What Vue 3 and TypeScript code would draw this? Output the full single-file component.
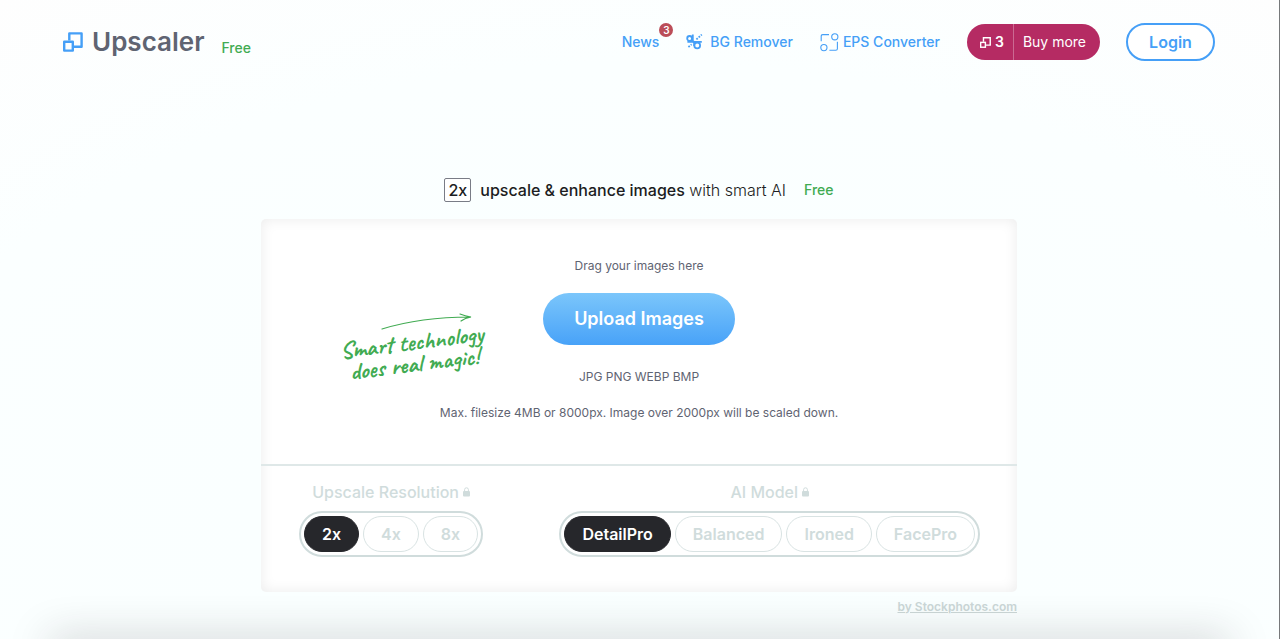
<script setup lang="ts">
import { ref } from 'vue'

const resolutions: string[] = ['2x', '4x', '8x']
const models: string[] = ['DetailPro', 'Balanced', 'Ironed', 'FacePro']
const resolution = ref('2x')
const model = ref('DetailPro')
</script>

<template>
  <div class="page">
    <header class="header">
      <a class="brand" href="#">
        <svg class="brand-icon" viewBox="0 0 20 20" aria-hidden="true">
          <path d="M6.3 8.6V1.4H18.6V14.8H11" />
          <rect x="1.2" y="9.8" width="8.6" height="8.8" />
        </svg>
        <span class="brand-name">Upscaler</span>
        <span class="free">Free</span>
      </a>
      <nav class="nav">
        <a class="nav-link news" href="#">News<span class="badge">3</span></a>
        <a class="nav-link remover" href="#">
          <svg class="remover-icon" viewBox="0 0 17 17" aria-hidden="true">
            <circle cx="3.6" cy="4.4" r="2.4" />
            <path d="M6.8 .4V6.2Q6.8 7.8 8.6 7.8H15.8M1.4 7.8H6.4Q8.2 7.8 8.2 9.6V12" />
            <circle cx="11.2" cy="11.4" r="2.9" />
            <path class="dots" d="M10.4 5.4L15.8 .6M2.4 13L5.6 10.4" />
          </svg>
          BG Remover
        </a>
        <a class="nav-link eps" href="#">
          <svg class="eps-icon" viewBox="0 0 19 19" aria-hidden="true">
            <path d="M1.2 8.2V3.2Q1.2 1.6 2.8 1.6H9M17.4 8.8V15.8Q17.4 17.3 15.8 17.3H9.4" />
            <circle cx="14.8" cy="3.8" r="3.1" />
            <circle cx="3.9" cy="14.6" r="3.1" />
          </svg>
          EPS Converter
        </a>
        <div class="credits">
          <span class="count">
            <svg class="count-icon" viewBox="0 0 20 20" aria-hidden="true">
              <path d="M6.3 8.6V1.4H18.6V14.8H11" />
              <rect x="1.2" y="9.8" width="8.6" height="8.8" />
            </svg>
            3
          </span>
          <a class="buy" href="#">Buy more</a>
        </div>
        <button class="login" type="button">Login</button>
      </nav>
    </header>

    <main class="main">
      <h1 class="title">
        <span class="factor">2x</span>
        <span><strong>upscale &amp; enhance images</strong> with smart AI</span>
        <span class="free">Free</span>
      </h1>

      <section class="card">
        <div class="drop">
          <p class="hint">Drag your images here</p>
          <div class="upload-row">
            <button class="upload" type="button">Upload Images</button>
            <div class="note">
              <svg class="arrow" viewBox="0 0 92 18" aria-hidden="true">
                <path d="M1 16Q40 4 89 4M79 1Q84 3 90 4Q84 5 80 8" />
              </svg>
              <p class="script">Smart technology<br />does real magic!</p>
            </div>
          </div>
          <p class="formats">JPG PNG WEBP BMP</p>
          <p class="limits">Max. filesize 4MB or 8000px. Image over 2000px will be scaled down.</p>
        </div>

        <div class="options">
          <fieldset class="group">
            <legend class="legend">
              Upscale Resolution
              <svg class="lock" viewBox="0 0 7 10" aria-hidden="true">
                <rect x="0" y="4" width="7" height="5.5" rx="1" />
                <path d="M1.6 4.4V2.6Q1.6 .8 3.5 .8T5.4 2.6V4.4" />
              </svg>
            </legend>
            <div class="pills">
              <label v-for="item in resolutions" :key="item" class="pill" :class="{ active: item === resolution }">
                <input v-model="resolution" class="radio" type="radio" name="resolution" :value="item" />{{ item }}
              </label>
            </div>
          </fieldset>
          <fieldset class="group">
            <legend class="legend">
              AI Model
              <svg class="lock" viewBox="0 0 7 10" aria-hidden="true">
                <rect x="0" y="4" width="7" height="5.5" rx="1" />
                <path d="M1.6 4.4V2.6Q1.6 .8 3.5 .8T5.4 2.6V4.4" />
              </svg>
            </legend>
            <div class="pills">
              <label v-for="item in models" :key="item" class="pill" :class="{ active: item === model }">
                <input v-model="model" class="radio" type="radio" name="model" :value="item" />{{ item }}
              </label>
            </div>
          </fieldset>
        </div>
      </section>
      <a class="credit" href="#">by Stockphotos.com</a>
    </main>
  </div>
</template>

<style>
body {
  margin: 0;
}
</style>

<style scoped>
.page {
  position: relative;
  box-sizing: border-box;
  min-height: 100vh;
  padding-right: 1px;
  overflow: hidden;
  border-right: 1px solid #77797b;
  font-family: Inter, "Liberation Sans", sans-serif;
  color: #5f6472;
  background: radial-gradient(ellipse 85% 100% at 50% 80%, #f9ffff 0%, #fbffff 70%, #fefefe 100%);
}

.page::after {
  content: "";
  position: absolute;
  right: 50px;
  bottom: -20px;
  left: 50px;
  height: 20px;
  box-shadow: 0 0 42px rgba(40, 30, 40, 0.26);
}

a {
  color: inherit;
  text-decoration: none;
}

.header {
  display: flex;
  align-items: center;
  justify-content: space-between;
  height: 84px;
  padding: 0 63px;
}

.brand {
  display: flex;
  align-items: center;
}

.brand-icon,
.count-icon,
.remover-icon,
.eps-icon {
  fill: none;
  stroke: currentColor;
}

.brand-icon {
  width: 20px;
  height: 20px;
  margin-right: 9px;
  color: #459ff7;
  stroke-width: 2.4;
  stroke-linejoin: round;
}

.brand-name {
  margin-right: 17px;
  font-size: 26px;
  font-weight: 600;
  line-height: 36px;
}

.free {
  color: #41ab52;
  font-size: 14px;
  font-weight: 500;
}

.brand .free {
  padding-top: 10px;
}

.nav {
  display: flex;
  align-items: center;
}

.nav-link {
  display: flex;
  align-items: center;
  color: #459ff7;
  font-size: 14px;
  font-weight: 500;
  line-height: 20px;
}

.news {
  position: relative;
  margin-right: 27px;
}

.badge {
  position: absolute;
  top: -9px;
  left: 100%;
  width: 14px;
  height: 14px;
  border-radius: 50%;
  background: #bb4d58;
  color: #fff;
  font-size: 10px;
  font-weight: 600;
  line-height: 14px;
  text-align: center;
}

.remover {
  gap: 7px;
  margin-right: 27px;
}

.remover-icon {
  width: 17px;
  height: 17px;
  stroke-width: 1.8;
}

.dots {
  stroke-dasharray: 1.8 1.2;
}

.eps {
  gap: 4px;
  margin-right: 27px;
}

.eps-icon {
  width: 19px;
  height: 19px;
  stroke-width: 1.1;
}

.credits {
  display: flex;
  height: 36px;
  margin-right: 26px;
  overflow: hidden;
  border-radius: 18px;
  background: #b52b63;
  color: #fff;
  font-size: 14px;
  line-height: 36px;
}

.count {
  display: flex;
  align-items: center;
  gap: 4px;
  padding: 0 9px 0 13px;
  border-right: 1px solid #cb6a92;
  font-weight: 600;
}

.count-icon {
  width: 11px;
  height: 11px;
  stroke-width: 2.6;
}

.buy {
  padding: 0 14px 0 9px;
}

.login {
  box-sizing: border-box;
  width: 89px;
  height: 38px;
  padding: 0;
  border: 2px solid #459ff7;
  border-radius: 19px;
  background: #fff;
  color: #459ff7;
  font: 600 16px/34px Inter, "Liberation Sans", sans-serif;
}

.main {
  display: flex;
  flex-direction: column;
  width: 756px;
  max-width: 100%;
  margin: 93px auto 0;
}

.title {
  display: flex;
  align-items: center;
  justify-content: center;
  height: 25px;
  margin: 0 0 17px;
  color: #1c1d22;
  font-size: 16px;
  font-weight: 300;
}

.title strong {
  font-weight: 500;
}

.factor {
  margin-right: 9px;
  padding: 0 3px;
  border: 1px solid #797c86;
  border-radius: 2px;
  background: #fff;
  font-weight: 500;
  line-height: 22px;
}

.title .free {
  margin-left: 18px;
}

.card {
  border-radius: 5px;
  background: #fff;
  box-shadow: inset 0 0 14px rgba(0, 0, 0, 0.08);
}

.drop {
  display: flex;
  flex-direction: column;
  align-items: center;
  height: 247px;
  box-sizing: border-box;
  padding-top: 38px;
  border-bottom: 2px solid #dfe8e8;
  font-size: 12px;
  line-height: 18px;
}

.drop p {
  margin: 0;
}

.upload-row {
  position: relative;
  margin: 18px 0 23px;
}

.upload {
  display: block;
  width: 192px;
  height: 52px;
  padding: 0;
  border: 0;
  border-radius: 26px;
  background: linear-gradient(#7bc6fb, #48a2f8);
  color: #fff;
  font: 600 18px/52px Inter, "Liberation Sans", sans-serif;
}

.note {
  position: absolute;
  top: 20px;
  right: 246px;
  width: 152px;
  color: #41ab52;
}

.arrow {
  display: block;
  width: 92px;
  height: 18px;
  margin-left: 44px;
  fill: none;
  stroke: currentColor;
  stroke-width: 1.2;
  stroke-linecap: round;
}

.drop .script {
  font-family: Caveat, Lato, cursive;
  font-size: 24px;
  font-weight: 600;
  line-height: 22px;
  text-align: center;
  white-space: nowrap;
  transform: rotate(-7deg);
}

.limits {
  padding-top: 18px;
}

.options {
  display: flex;
  justify-content: space-between;
  padding: 16px 37px 35px 38px;
}

.group {
  min-width: 0;
  margin: 0;
  padding: 0;
  border: 0;
  color: #d0dcdc;
}

.legend {
  display: flex;
  align-items: center;
  gap: 4px;
  margin: 0 auto;
  padding: 0 0 9px;
  font-size: 16px;
  font-weight: 500;
  line-height: 20px;
}

.lock {
  width: 7px;
  height: 10px;
  fill: currentColor;
}

.lock path {
  fill: none;
  stroke: currentColor;
}

.pills {
  display: flex;
  gap: 4px;
  padding: 3px;
  border: 2px solid #d0dcdc;
  border-radius: 23px;
}

.pill {
  position: relative;
  padding: 0 17px;
  border: 1px solid #d9e3e3;
  border-radius: 18px;
  font-size: 16px;
  font-weight: 600;
  line-height: 34px;
}

.pill.active {
  border-color: #26272b;
  background: #26272b;
  color: #fff;
}

.radio {
  position: absolute;
  inset: 0;
  width: 100%;
  height: 100%;
  margin: 0;
  opacity: 0;
}

.credit {
  align-self: flex-end;
  margin-top: 6px;
  color: #cbd7d7;
  font-size: 12px;
  font-weight: 600;
  line-height: 18px;
  text-decoration: underline;
}
</style>
